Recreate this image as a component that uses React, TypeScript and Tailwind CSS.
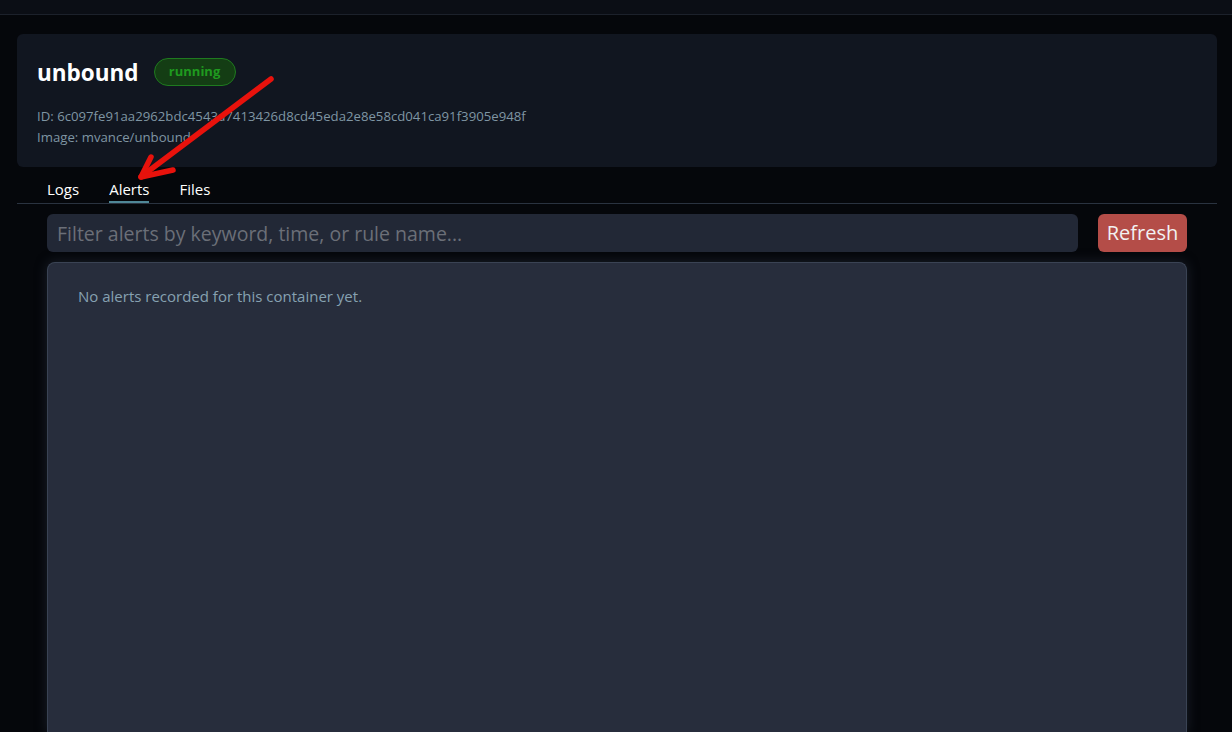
import React from "react";

export default function App() {
  const font = { fontFamily: '"Open Sans", "Noto Sans", sans-serif' };
  return (
    <div className="relative h-[732px] w-full overflow-hidden bg-[#05070b]" style={font}>
      <div className="h-[15px] border-b border-[#1c212b] bg-[#0b0e15]" />
      <div className="pl-[17px] pr-[15px] pt-[19px]">
        <div className="rounded-md bg-[#111620] px-5 pb-[19px] pt-6">
          <div className="flex h-[28px] items-center gap-[15px]">
            <h1 className="pt-[3px] text-[22.5px] font-bold leading-none text-white">unbound</h1>
            <span className="flex h-[28px] w-[82px] items-center justify-center rounded-full border border-[#1f7a1f] bg-[#143d14] text-[13px] font-bold text-[#1f9a1f]">
              running
            </span>
          </div>
          <div className="mt-5 text-[13.2px] leading-[21px] text-[#7f95a3]">
            <div>ID: 6c097fe91aa2962bdc4543a7413426d8cd45eda2e8e58cd041ca91f3905e948f</div>
            <div>Image: mvance/unbound</div>
          </div>
        </div>
        <div className="flex h-[37px] items-end gap-[30px] border-b border-[#2a3340] pl-[30px]">
          <div className="pb-[4px] text-[15px] leading-[20px] text-white">Logs</div>
          <div className="border-b-2 border-[#4f8797] pb-[2px] text-[15px] leading-[20px] text-white">Alerts</div>
          <div className="pb-[4px] text-[15px] leading-[20px] text-white">Files</div>
        </div>
        <div className="px-[30px]">
          <div className="mt-[10px] flex h-[38px] gap-5">
            <input
              className="h-full flex-1 rounded-md bg-[#222836] px-[10px] text-[19.5px] text-white outline-none placeholder:text-[#6b6f78]"
              placeholder="Filter alerts by keyword, time, or rule name..."
              style={font}
            />
            <button className="h-full w-[89px] rounded-md bg-[#b44d48] text-[20px] text-[#f2f2f2]">Refresh</button>
          </div>
          <div className="mt-[10px] h-[470px] rounded-t-lg border border-b-0 border-[#3a4354] bg-[#272d3c] px-[30px] pt-[22px] shadow-[0_0_12px_rgba(40,48,64,0.6)]">
            <p className="text-[15px] text-[#86a1b1]">No alerts recorded for this container yet.</p>
          </div>
        </div>
      </div>
      <svg className="pointer-events-none absolute left-0 top-0" width="1232" height="732">
        <g stroke="#e8120c" strokeWidth="5.5" strokeLinecap="round" fill="none">
          <line x1="271" y1="79" x2="142" y2="176" />
          <line x1="141" y1="177" x2="151" y2="157" />
          <line x1="141" y1="177" x2="173" y2="170" />
        </g>
      </svg>
    </div>
  );
}
